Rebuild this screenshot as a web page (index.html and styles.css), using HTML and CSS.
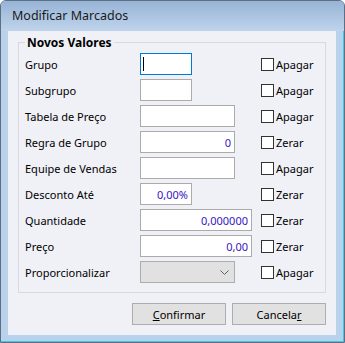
FILE: index.html
```html
<html>
<head>
    <link rel="stylesheet" href="styles.css">
    <title>Modificar Marcados</title>
</head>
<body>
    <div class="window">
        <div class="titlebar">Modificar Marcados</div>
        <div class="client">
            <fieldset class="group">
                <legend>Novos Valores</legend>
                <div class="grid">
                    <div class="label">Grupo</div>
                    <div class="field"><div class="input short focused"><span class="caret"></span></div></div>
                    <div class="check"><span class="box"></span>Apagar</div>

                    <div class="label">Subgrupo</div>
                    <div class="field"><div class="input short"></div></div>
                    <div class="check"><span class="box"></span>Apagar</div>

                    <div class="label">Tabela de Preço</div>
                    <div class="field"><div class="input medium"></div></div>
                    <div class="check"><span class="box"></span>Apagar</div>

                    <div class="label">Regra de Grupo</div>
                    <div class="field"><div class="input medium value">0</div></div>
                    <div class="check"><span class="box"></span>Zerar</div>

                    <div class="label">Equipe de Vendas</div>
                    <div class="field"><div class="input medium"></div></div>
                    <div class="check"><span class="box"></span>Apagar</div>

                    <div class="label">Desconto Até</div>
                    <div class="field"><div class="input short value">0,00%</div></div>
                    <div class="check"><span class="box"></span>Zerar</div>

                    <div class="label">Quantidade</div>
                    <div class="field"><div class="input long value">0,000000</div></div>
                    <div class="check"><span class="box"></span>Zerar</div>

                    <div class="label">Preço</div>
                    <div class="field"><div class="input long value">0,00</div></div>
                    <div class="check"><span class="box"></span>Zerar</div>

                    <div class="label">Proporcionalizar</div>
                    <div class="field">
                        <div class="combo">
                            <svg width="9" height="5" viewBox="0 0 9 5"><path d="M0.5 0.5 L4.5 4.5 L8.5 0.5" fill="none" stroke="#606060" stroke-width="1"/></svg>
                        </div>
                    </div>
                    <div class="check"><span class="box"></span>Apagar</div>
                </div>
            </fieldset>
            <div class="buttons">
                <button class="btn"><u>C</u>onfirmar</button>
                <button class="btn">Cancela<u>r</u></button>
            </div>
        </div>
    </div>
</body>
</html>
```

FILE: styles.css
```css
body {
    margin: 0;
    font-family: "Noto Sans", sans-serif;
    font-size: 11px;
    color: #000;
}

.window {
    width: 345px;
    height: 343px;
    box-sizing: border-box;
    border: 1px solid #5e6f84;
    border-top-left-radius: 6px;
    border-top-right-radius: 6px;
    background: #b9d1ea;
    box-shadow: inset -1px -1px 0 #3fc7e8;
    display: flex;
    flex-direction: column;
}

.titlebar {
    height: 30px;
    padding-left: 11px;
    font-size: 12.5px;
    line-height: 30px;
    color: #1a1a1a;
    background: linear-gradient(#97b4d6, #bfd4ec);
    border-top-left-radius: 5px;
    border-top-right-radius: 5px;
}

.client {
    margin: 0 8px 7px 7px;
    flex: 1;
    background: #f0f0f7;
    display: flex;
    flex-direction: column;
}

.group {
    margin: 4px 10px 0 10px;
    padding: 0;
    border: 1px solid #d9d9de;
    height: 258px;
    box-sizing: border-box;
}

.group legend {
    font-weight: bold;
    font-size: 12px;
    line-height: 15px;
    margin-left: 6px;
    padding: 0 2px;
}

.grid {
    display: grid;
    grid-template-columns: 115px 121px auto;
    grid-auto-rows: 26px;
    padding: 1px 0 0 6px;
}

.label, .field, .check {
    display: flex;
    align-items: center;
}

.input {
    height: 22px;
    box-sizing: border-box;
    border: 1px solid #ababab;
    background: #fff;
    display: flex;
    align-items: center;
    position: relative;
}

.short { width: 52px; }
.medium { width: 95px; }
.long { width: 112px; }

.focused {
    border-color: #0078d7;
}

.caret {
    width: 1px;
    height: 14px;
    background: #000;
    margin-left: 2px;
}

.value {
    justify-content: flex-end;
    padding-right: 3px;
    color: #3716c2;
}

.combo {
    width: 95px;
    height: 22px;
    box-sizing: border-box;
    border: 1px solid #adadad;
    background: #e1e1e1;
    display: flex;
    align-items: center;
    justify-content: flex-end;
    padding-right: 5px;
}

.check .box {
    width: 11px;
    height: 11px;
    border: 1px solid #333;
    background: #fff;
    margin-right: 2px;
}

.buttons {
    display: flex;
    justify-content: flex-end;
    gap: 6px;
    margin: 10px 10px 0 0;
}

.btn {
    width: 94px;
    height: 22px;
    border: 1px solid #adadad;
    background: #e1e1e1;
    font-family: "Noto Sans", sans-serif;
    font-size: 11px;
    color: #000;
    padding: 0;
}
```
